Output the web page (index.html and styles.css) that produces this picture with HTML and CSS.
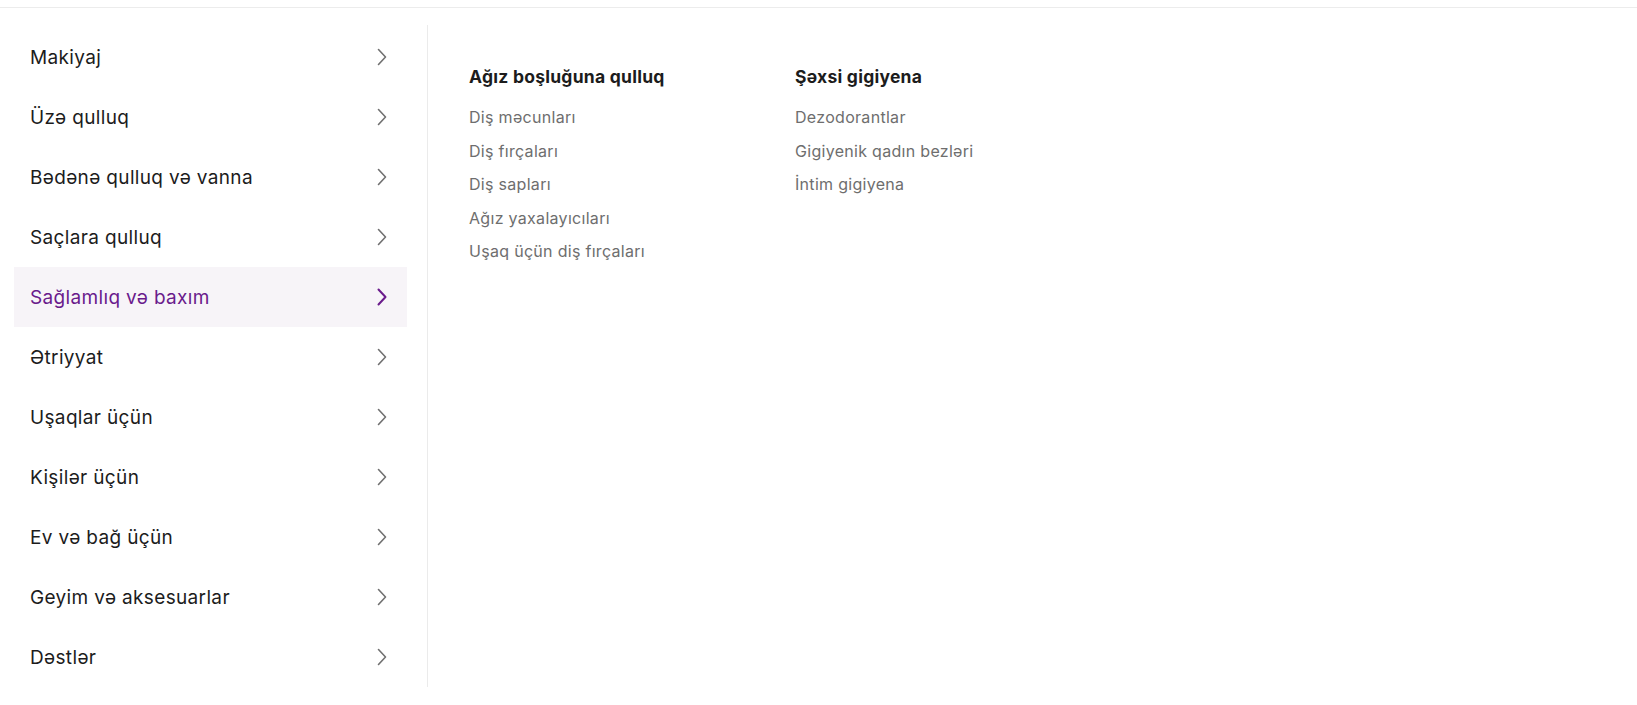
FILE: index.html
```html
<!DOCTYPE html>
<html lang="az">
<head>
<meta charset="utf-8">
<link rel="stylesheet" href="styles.css">
</head>
<body>
<div class="topbar"></div>
<div class="menu">
  <ul class="sidebar">
    <li class="cat"><span>Makiyaj</span><svg class="chev" viewBox="0 0 10 18"><path d="M1.5 1.5 L8.5 9 L1.5 16.5"/></svg></li>
    <li class="cat"><span>Üzə qulluq</span><svg class="chev" viewBox="0 0 10 18"><path d="M1.5 1.5 L8.5 9 L1.5 16.5"/></svg></li>
    <li class="cat"><span>Bədənə qulluq və vanna</span><svg class="chev" viewBox="0 0 10 18"><path d="M1.5 1.5 L8.5 9 L1.5 16.5"/></svg></li>
    <li class="cat"><span>Saçlara qulluq</span><svg class="chev" viewBox="0 0 10 18"><path d="M1.5 1.5 L8.5 9 L1.5 16.5"/></svg></li>
    <li class="cat active"><span>Sağlamlıq və baxım</span><svg class="chev" viewBox="0 0 10 18"><path d="M1.5 1.5 L8.5 9 L1.5 16.5"/></svg></li>
    <li class="cat"><span>Ətriyyat</span><svg class="chev" viewBox="0 0 10 18"><path d="M1.5 1.5 L8.5 9 L1.5 16.5"/></svg></li>
    <li class="cat"><span>Uşaqlar üçün</span><svg class="chev" viewBox="0 0 10 18"><path d="M1.5 1.5 L8.5 9 L1.5 16.5"/></svg></li>
    <li class="cat"><span>Kişilər üçün</span><svg class="chev" viewBox="0 0 10 18"><path d="M1.5 1.5 L8.5 9 L1.5 16.5"/></svg></li>
    <li class="cat"><span>Ev və bağ üçün</span><svg class="chev" viewBox="0 0 10 18"><path d="M1.5 1.5 L8.5 9 L1.5 16.5"/></svg></li>
    <li class="cat"><span>Geyim və aksesuarlar</span><svg class="chev" viewBox="0 0 10 18"><path d="M1.5 1.5 L8.5 9 L1.5 16.5"/></svg></li>
    <li class="cat"><span>Dəstlər</span><svg class="chev" viewBox="0 0 10 18"><path d="M1.5 1.5 L8.5 9 L1.5 16.5"/></svg></li>
  </ul>
  <div class="panel">
    <div class="col">
      <h3 class="col-title">Ağız boşluğuna qulluq</h3>
      <ul class="links">
        <li>Diş məcunları</li>
        <li>Diş fırçaları</li>
        <li>Diş sapları</li>
        <li>Ağız yaxalayıcıları</li>
        <li>Uşaq üçün diş fırçaları</li>
      </ul>
    </div>
    <div class="col">
      <h3 class="col-title">Şəxsi gigiyena</h3>
      <ul class="links">
        <li>Dezodorantlar</li>
        <li>Gigiyenik qadın bezləri</li>
        <li>İntim gigiyena</li>
      </ul>
    </div>
  </div>
</div>
</body>
</html>
```
FILE: styles.css
```css
* { box-sizing: border-box; }
html, body {
  margin: 0;
  padding: 0;
  background: #fff;
  font-family: "Inter", "Noto Sans", sans-serif;
  color: #1c1c1c;
}
.topbar {
  height: 8px;
  border-bottom: 1px solid #ececec;
}
.menu {
  display: flex;
  margin-top: 17px;
}
.sidebar {
  list-style: none;
  margin: 0 20px 0 14px;
  padding: 2px 0 0 0;
  width: 393px;
}
.cat {
  height: 60px;
  display: flex;
  align-items: center;
  justify-content: space-between;
  padding: 0 20px 0 16px;
  font-size: 19px;
  letter-spacing: 0.35px;
  color: #1c1c1c;
}
.cat.active {
  background: #f7f4f8;
  color: #6a1b8c;
}
.chev {
  width: 10px;
  height: 18px;
  fill: none;
  stroke: #707070;
  stroke-width: 1.6;
  stroke-linecap: round;
  stroke-linejoin: round;
}
.cat.active .chev {
  stroke: #6a1b8c;
  stroke-width: 2;
}
.panel {
  flex: 1;
  border-left: 1px solid #ebebeb;
  display: flex;
  padding: 40px 0 0 41px;
  min-height: 662px;
}
.col {
  width: 326px;
}
.col-title {
  margin: 0 0 12px 0;
  font-size: 17.5px;
  font-weight: 700;
  letter-spacing: 0.25px;
  line-height: 24px;
  color: #1c1c1c;
}
.links {
  list-style: none;
  margin: 0;
  padding: 0;
}
.links li {
  font-size: 16px;
  letter-spacing: 0.3px;
  line-height: 33.6px;
  color: #6e6e6e;
}
```
